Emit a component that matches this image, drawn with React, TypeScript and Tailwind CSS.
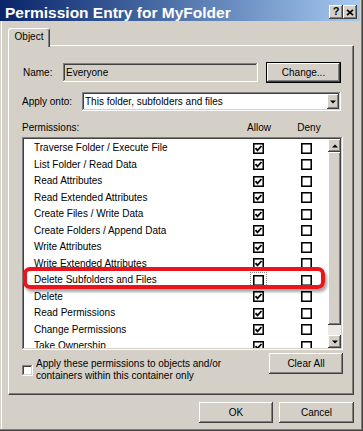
import React from "react";

const raised =
  "bg-[#d4d0c8] shadow-[inset_-1px_-1px_#404040,inset_1px_1px_#ffffff,inset_-2px_-2px_#808080,inset_2px_2px_#d4d0c8]";
const sunken =
  "shadow-[inset_-1px_-1px_#ffffff,inset_1px_1px_#808080,inset_-2px_-2px_#d4d0c8,inset_2px_2px_#404040]";

function LvCheck({ checked, focus }: { checked: boolean; focus?: boolean }) {
  return (
    <div
      className={
        focus
          ? "w-[11px] h-[11px] shrink-0 outline outline-1 outline-dotted outline-[#8a8a8a] outline-offset-[2px]"
          : "w-[11px] h-[11px] shrink-0"
      }
    >
      <svg width="11" height="11" viewBox="0 0 11 11" className="block">
        <rect x="0.75" y="0.75" width="9.5" height="9.5" fill="#fff" stroke="#000" strokeWidth="1.6" />
        {checked && (
          <path d="M2.5 5.2 L4.5 7.4 L8.5 3.0" fill="none" stroke="#000" strokeWidth="1.8" />
        )}
      </svg>
    </div>
  );
}

function DownArrow() {
  return (
    <svg width="6" height="4" viewBox="0 0 6 4" className="block">
      <polygon points="0,0.5 6,0.5 3,3.5" fill="#000" />
    </svg>
  );
}

function UpArrow() {
  return (
    <svg width="6" height="4" viewBox="0 0 6 4" className="block">
      <polygon points="0,3.5 6,3.5 3,0.5" fill="#000" />
    </svg>
  );
}

const rows: { label: string; allow: boolean; focus?: boolean }[] = [
  { label: "Traverse Folder / Execute File", allow: true },
  { label: "List Folder / Read Data", allow: true },
  { label: "Read Attributes", allow: true },
  { label: "Read Extended Attributes", allow: true },
  { label: "Create Files / Write Data", allow: true },
  { label: "Create Folders / Append Data", allow: true },
  { label: "Write Attributes", allow: true },
  { label: "Write Extended Attributes", allow: true },
  { label: "Delete Subfolders and Files", allow: false, focus: true },
  { label: "Delete", allow: true },
  { label: "Read Permissions", allow: true },
  { label: "Change Permissions", allow: true },
  { label: "Take Ownership", allow: true },
];

export default function App() {
  return (
    <div className="w-[363px] h-[431px] bg-[#d4d0c8] flex flex-col font-['Liberation_Sans',Arial,sans-serif] text-[10px] text-black overflow-hidden shadow-[inset_-1px_-1px_#404040,inset_-2px_-2px_#808080,inset_1px_0_#d4d0c8,inset_2px_0_#ffffff]">
      {/* Title bar */}
      <div className="h-[21px] mr-[3px] flex items-start bg-linear-to-r from-[#0a246a] to-[#a6caf0] pr-[3px]">
        <div className="flex-1 pl-[5px] pt-[5px] text-white font-bold text-[15.5px] leading-[15.5px] whitespace-nowrap">
          Permission Entry for MyFolder
        </div>
        <div className="mt-[5px] flex">
          <div className={`w-[14px] h-[14px] flex items-center justify-center ${raised}`}>
            <span className="font-bold text-[11px] leading-[11px] mt-[-1px]">?</span>
          </div>
          <div className={`w-[14px] h-[14px] flex items-center justify-center ${raised}`}>
            <svg width="8" height="7" viewBox="0 0 8 7" className="block">
              <path d="M1 0.8 L7 6.2 M7 0.8 L1 6.2" stroke="#000" strokeWidth="1.7" />
            </svg>
          </div>
        </div>
      </div>

      {/* Body */}
      <div className="flex flex-col pl-[8px] pr-[9px] pt-[7px]">
        {/* Tab strip */}
        <div className="flex">
          <div className="relative z-10 h-[19px] w-[42px] -mb-[2px] rounded-t-[3px] bg-[#d4d0c8] border-t border-l border-white border-r border-r-[#404040] shadow-[inset_-1px_0_#808080] flex justify-center pt-[2px] leading-[12px]">
            Object
          </div>
        </div>

        {/* Tab panel */}
        <div className="h-[350px] border-t border-l border-white border-r border-b border-r-[#404040] border-b-[#404040] shadow-[inset_-1px_-1px_#808080] pl-[13px] pr-[10px] flex flex-col">
          {/* Name row */}
          <div className="mt-[16px] flex items-center h-[21px]">
            <div className="ml-[1px] w-[40px]">Name:</div>
            <div className={`w-[195px] h-[19px] bg-[#d4d0c8] pl-[3px] flex items-center ${sunken}`}>
              Everyone
            </div>
            <button className="ml-[8px] w-[75px] h-[21px] border border-black bg-[#d4d0c8] shadow-[inset_-1px_-1px_#404040,inset_1px_1px_#ffffff,inset_-2px_-2px_#808080] flex items-center justify-center">
              Change...
            </button>
          </div>

          {/* Apply onto row */}
          <div className="mt-[9px] flex items-center h-[19px]">
            <div className="w-[60px]">Apply onto:</div>
            <div className={`w-[259px] h-[19px] bg-white p-[2px] flex ${sunken}`}>
              <div className="flex-1 pl-[1px] flex items-center whitespace-nowrap">
                This folder, subfolders and files
              </div>
              <div className={`w-[12px] h-[15px] flex items-center justify-center ${raised}`}>
                <DownArrow />
              </div>
            </div>
          </div>

          {/* Permissions header */}
          <div className="mt-[9px] h-[14px] flex items-center pr-[14px]">
            <div className="flex-1">Permissions:</div>
            <div className="w-[40px] text-center">Allow</div>
            <div className="ml-[10px] w-[40px] text-center">Deny</div>
          </div>

          {/* List */}
          <div className={`relative mt-[3px] h-[213px] bg-white p-[2px] flex ${sunken}`}>
            <div className="flex-1 overflow-hidden pt-[1px]">
              {rows.map((r) => (
                <div key={r.label} className="h-[16.5px] flex items-center">
                  <div className="flex-1 pl-[10px] whitespace-nowrap leading-[16.5px]">{r.label}</div>
                  <LvCheck checked={r.allow} focus={r.focus} />
                  <div className="ml-[37px] mr-[16px]">
                    <LvCheck checked={false} />
                  </div>
                </div>
              ))}
            </div>
            {/* Scrollbar */}
            <div className="w-[13px] flex flex-col">
              <div className={`h-[13px] flex items-center justify-center ${raised}`}>
                <UpArrow />
              </div>
              <div className={`h-[173px] ${raised}`} />
              <div className="flex-1 bg-[#ebe9e5]" />
              <div className={`h-[13px] flex items-center justify-center ${raised}`}>
                <DownArrow />
              </div>
            </div>
            {/* Red highlight annotation */}
            <div className="absolute left-[1px] top-[130px] w-[302px] h-[22px] rounded-[7px] border-[4px] border-[#ea141c] shadow-[2px_3px_3px_rgba(0,0,0,0.35)] pointer-events-none" />
          </div>

          {/* Bottom row */}
          <div className="mt-[3px] flex items-start">
            <div className="flex-1 flex items-start pt-[5px]">
              <div className={`mt-[7px] w-[11px] h-[11px] bg-white shrink-0 ${sunken}`} />
              <div className="ml-[3px] leading-[12px]">
                Apply these permissions to objects and/or
                <br />
                containers within this container only
              </div>
            </div>
            <button className={`w-[74px] h-[21px] flex items-center justify-center ${raised}`}>
              Clear All
            </button>
          </div>
        </div>

        {/* OK / Cancel */}
        <div className="mt-[7px] flex justify-end gap-[6px]">
          <button className={`w-[74px] h-[21px] flex items-center justify-center ${raised}`}>OK</button>
          <button className={`w-[75px] h-[21px] flex items-center justify-center ${raised}`}>Cancel</button>
        </div>
      </div>
    </div>
  );
}
